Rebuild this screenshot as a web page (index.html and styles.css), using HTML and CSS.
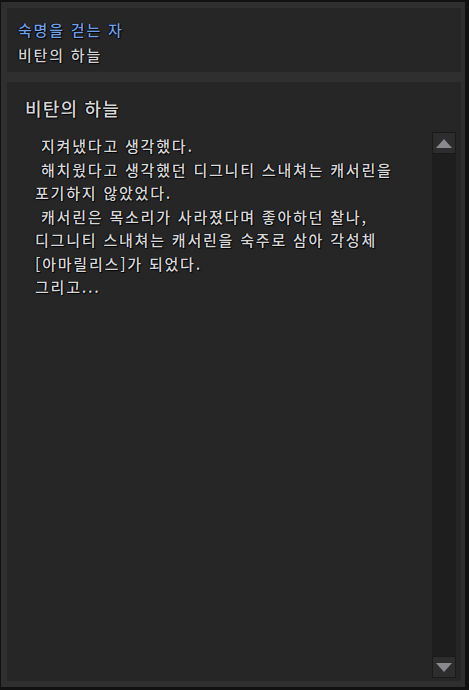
FILE: index.html
```html
<!DOCTYPE html>
<html lang="ko">
<head>
  <meta charset="UTF-8" />
  <meta name="viewport" content="width=device-width, initial-scale=1.0"/>
  <title>비탄의 하늘</title>
  <link rel="stylesheet" href="styles.css">
</head>
<body>

  <div class="frame">
    <div class="header">
      <div class="quest-name">숙명을 걷는 자</div>
      <div class="chapter-name">비탄의 하늘</div>
    </div>

    <div class="content">
      <h2 class="content-title">비탄의 하늘</h2>
      <div class="content-body">
        <div class="story">
          <div class="line"> 지켜냈다고 생각했다.</div>
          <div class="line"> 해치웠다고 생각했던 디그니티 스내쳐는 캐서린을</div>
          <div class="line">포기하지 않았었다.</div>
          <div class="line"> 캐서린은 목소리가 사라졌다며 좋아하던 찰나,</div>
          <div class="line">디그니티 스내쳐는 캐서린을 숙주로 삼아 각성체</div>
          <div class="line">[아마릴리스]가 되었다.</div>
          <div class="line">그리고...</div>
        </div>
        <div class="scrollbar">
          <button class="scroll-btn up"><span class="arrow"></span></button>
          <div class="track"></div>
          <button class="scroll-btn down"><span class="arrow"></span></button>
        </div>
      </div>
    </div>
  </div>

</body>
</html>
```

FILE: styles.css
```css
* {
  box-sizing: border-box;
}

body {
  margin: 0;
  padding: 0;
  background-color: #111;
  font-family: 'Noto Sans CJK KR', 'Noto Sans', sans-serif;
  width: 469px;
  height: 690px;
  overflow: hidden;
}

.frame {
  margin: 2px 4px 0 1px;
  height: 685px;
  background-color: #2f2f2f;
  padding: 6px 4px 6px 6px;
  display: flex;
  flex-direction: column;
  gap: 10px;
}

.header {
  height: 64px;
  background-color: #262626;
  padding: 9px 11px 0;
  font-size: 15px;
  font-weight: 500;
  line-height: 25px;
  letter-spacing: 1.8px;
  text-shadow: 1px 1px 1px #000, -1px 0 1px #000;
}

.quest-name {
  color: #6f9fe6;
}

.chapter-name {
  color: #d2d2d2;
}

.content {
  flex: 1;
  background-color: #262626;
  padding: 14px 5px 3px 0;
  display: flex;
  flex-direction: column;
}

.content-title {
  margin: 0 0 12px 18px;
  font-size: 18px;
  font-weight: 500;
  line-height: 24px;
  letter-spacing: 1.2px;
  color: #d6d6d6;
  text-shadow: 1px 1px 1px #000, -1px 0 1px #000;
}

.content-body {
  flex: 1;
  display: flex;
}

.story {
  flex: 1;
  padding: 2px 0 0 28px;
  font-size: 15px;
  font-weight: 500;
  line-height: 23.5px;
  letter-spacing: 1.8px;
  color: #d8d8d8;
  text-shadow: 1px 1px 1px #000, -1px 0 1px #000;
}

.line {
  white-space: pre;
}

.scrollbar {
  width: 24px;
  display: flex;
  flex-direction: column;
  background-color: #1e1e1e;
}

.track {
  flex: 1;
}

.scroll-btn {
  width: 24px;
  height: 22px;
  padding: 0;
  border: 1px solid #1a1a1a;
  background-color: #2d2d2d;
  display: flex;
  align-items: center;
  justify-content: center;
}

.arrow {
  width: 0;
  height: 0;
  border-left: 8px solid transparent;
  border-right: 8px solid transparent;
}

.up .arrow {
  border-bottom: 9px solid #8a8a8e;
}

.down .arrow {
  border-top: 9px solid #8a8a8e;
}
```
